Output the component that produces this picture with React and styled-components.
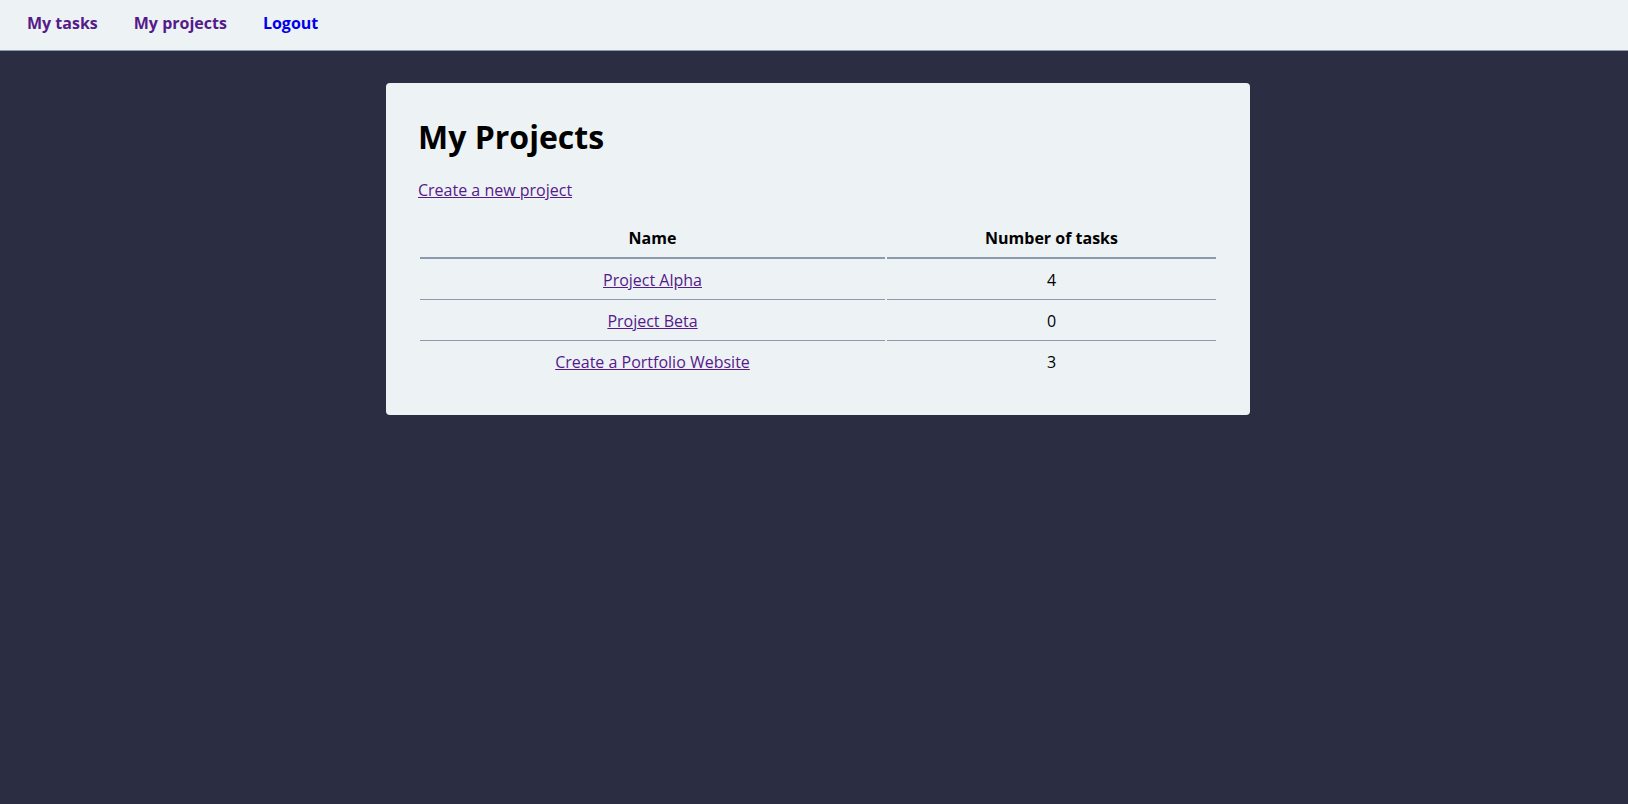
import React from "react";
import styled, { createGlobalStyle } from "styled-components";

const projects = [
  { name: "Project Alpha", tasks: 4 },
  { name: "Project Beta", tasks: 0 },
  { name: "Create a Portfolio Website", tasks: 3 },
];

const GlobalStyle = createGlobalStyle`
  body {
    margin: 0;
    background: #2b2d42;
    font-family: "Open Sans", "Noto Sans", sans-serif;
    font-size: 16px;
    line-height: 1.5;
    color: #000;
  }
`;

const Nav = styled.nav`
  display: flex;
  gap: 36px;
  padding: 11px 27px 15px;
  background: #edf2f4;
  border-bottom: 1px solid #8d99ae;
`;

const NavLink = styled.a`
  font-weight: 700;
  text-decoration: none;
  color: ${(p) => (p.$fresh ? "#0000ee" : "#551a8b")};
`;

const Main = styled.main`
  padding: 32px 0 0 8px;
`;

const Card = styled.section`
  width: 864px;
  box-sizing: border-box;
  margin: 0 auto;
  padding: 32px;
  background: #edf2f4;
  border-radius: 4px;
`;

const Title = styled.h1`
  margin: 3px 0 22px;
  font-size: 32px;
  line-height: 1.2;
  font-weight: 700;
`;

const TextLink = styled.a`
  color: #551a8b;
  text-decoration: underline;
`;

const Table = styled.table`
  width: 100%;
  margin-top: 15px;
  border-spacing: 2px;
`;

const Th = styled.th`
  width: ${(p) => p.$width || "auto"};
  padding: 7px 1px;
  font-weight: 700;
  text-align: center;
  border-bottom: 2px solid #8d99ae;
`;

const Td = styled.td`
  padding: 7px 1px;
  text-align: center;
  border-bottom: ${(p) => (p.$last ? "none" : "1px solid #8d99ae")};
`;

export default function App() {
  return (
    <>
      <GlobalStyle />
      <Nav>
        <NavLink href="#">My tasks</NavLink>
        <NavLink href="#">My projects</NavLink>
        <NavLink href="#" $fresh>
          Logout
        </NavLink>
      </Nav>
      <Main>
        <Card>
          <Title>My Projects</Title>
          <TextLink href="#">Create a new project</TextLink>
          <Table>
            <thead>
              <tr>
                <Th $width="463px">Name</Th>
                <Th>Number of tasks</Th>
              </tr>
            </thead>
            <tbody>
              {projects.map((p, i) => {
                const last = i === projects.length - 1;
                return (
                  <tr key={p.name}>
                    <Td $last={last}>
                      <TextLink href="#">{p.name}</TextLink>
                    </Td>
                    <Td $last={last}>{p.tasks}</Td>
                  </tr>
                );
              })}
            </tbody>
          </Table>
        </Card>
      </Main>
    </>
  );
}
